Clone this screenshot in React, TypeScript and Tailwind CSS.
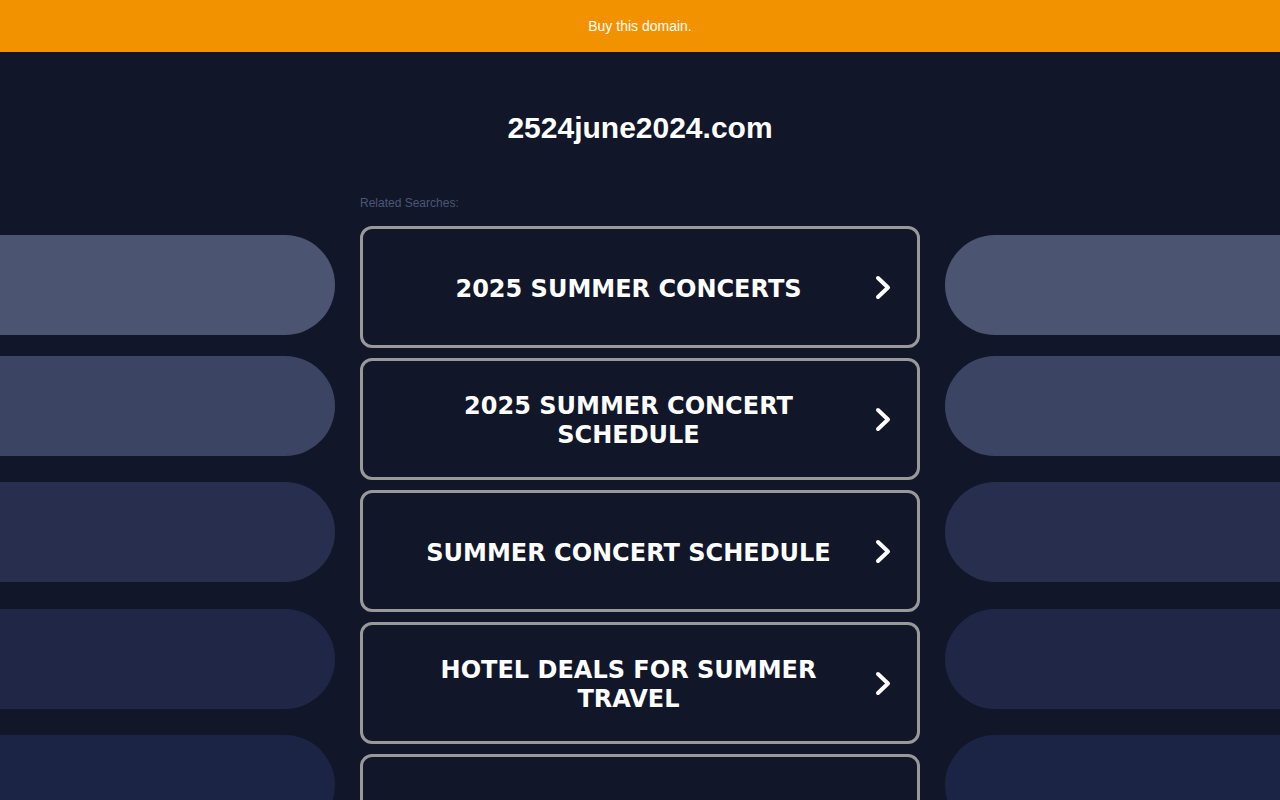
const searches = [
  "2025 SUMMER CONCERTS",
  "2025 SUMMER CONCERT SCHEDULE",
  "SUMMER CONCERT SCHEDULE",
  "HOTEL DEALS FOR SUMMER TRAVEL",
  "SUMMER FESTIVALS",
];

const pills = [
  { color: "bg-[#4b5571]", gap: "mt-0" },
  { color: "bg-[#3c4463]", gap: "mt-[21px]" },
  { color: "bg-[#282f4e]", gap: "mt-[26px]" },
  { color: "bg-[#1f2646]", gap: "mt-[27px]" },
  { color: "bg-[#1c2446]", gap: "mt-[26px]" },
];

function Chevron() {
  return (
    <svg
      width="16"
      height="25"
      viewBox="0 0 16 25"
      fill="none"
      className="shrink-0 ml-[21px]"
    >
      <path
        d="M3 3 L13 12.5 L3 22"
        stroke="white"
        strokeWidth="4"
        strokeLinecap="round"
        strokeLinejoin="round"
      />
    </svg>
  );
}

function SideColumn({ side }: { side: "left" | "right" }) {
  return (
    <div className="w-[335px] shrink-0 flex flex-col pt-[40px]">
      {pills.map((p, i) => (
        <div
          key={i}
          className={`${p.gap} h-[100px] w-full ${p.color} ${
            side === "left" ? "rounded-r-full" : "rounded-l-full"
          }`}
        />
      ))}
    </div>
  );
}

export default function App() {
  return (
    <div className="min-h-screen h-[800px] overflow-hidden bg-[#111729] font-['Liberation_Sans',Arial,sans-serif]">
      {/* Top banner */}
      <div className="h-[52px] bg-[#f39200] flex items-center justify-center">
        <span className="text-[14px] text-white">Buy this domain.</span>
      </div>

      {/* Domain title */}
      <h1 className="pt-[58px] text-center text-[30px] leading-[36px] font-bold text-white">
        2524june2024.com
      </h1>

      {/* Related searches */}
      <div className="mt-[49px] flex justify-center gap-[25px]">
        <SideColumn side="left" />

        <div className="w-[560px] shrink-0 flex flex-col">
          <div className="text-[12px] leading-[16px] text-[#4b5676]">
            Related Searches:
          </div>
          <div className="mt-[15px] flex flex-col gap-[10px]">
            {searches.map((s) => (
              <a
                key={s}
                href="#"
                className="h-[122px] rounded-[12px] border-[3px] border-[#999999] flex items-center pl-10 pr-[26px]"
              >
                <span className="flex-1 pt-1 text-center text-white font-bold text-[24px] leading-[29px] font-['DejaVu_Sans',Verdana,sans-serif]">
                  {s}
                </span>
                <Chevron />
              </a>
            ))}
          </div>
        </div>

        <SideColumn side="right" />
      </div>
    </div>
  );
}
